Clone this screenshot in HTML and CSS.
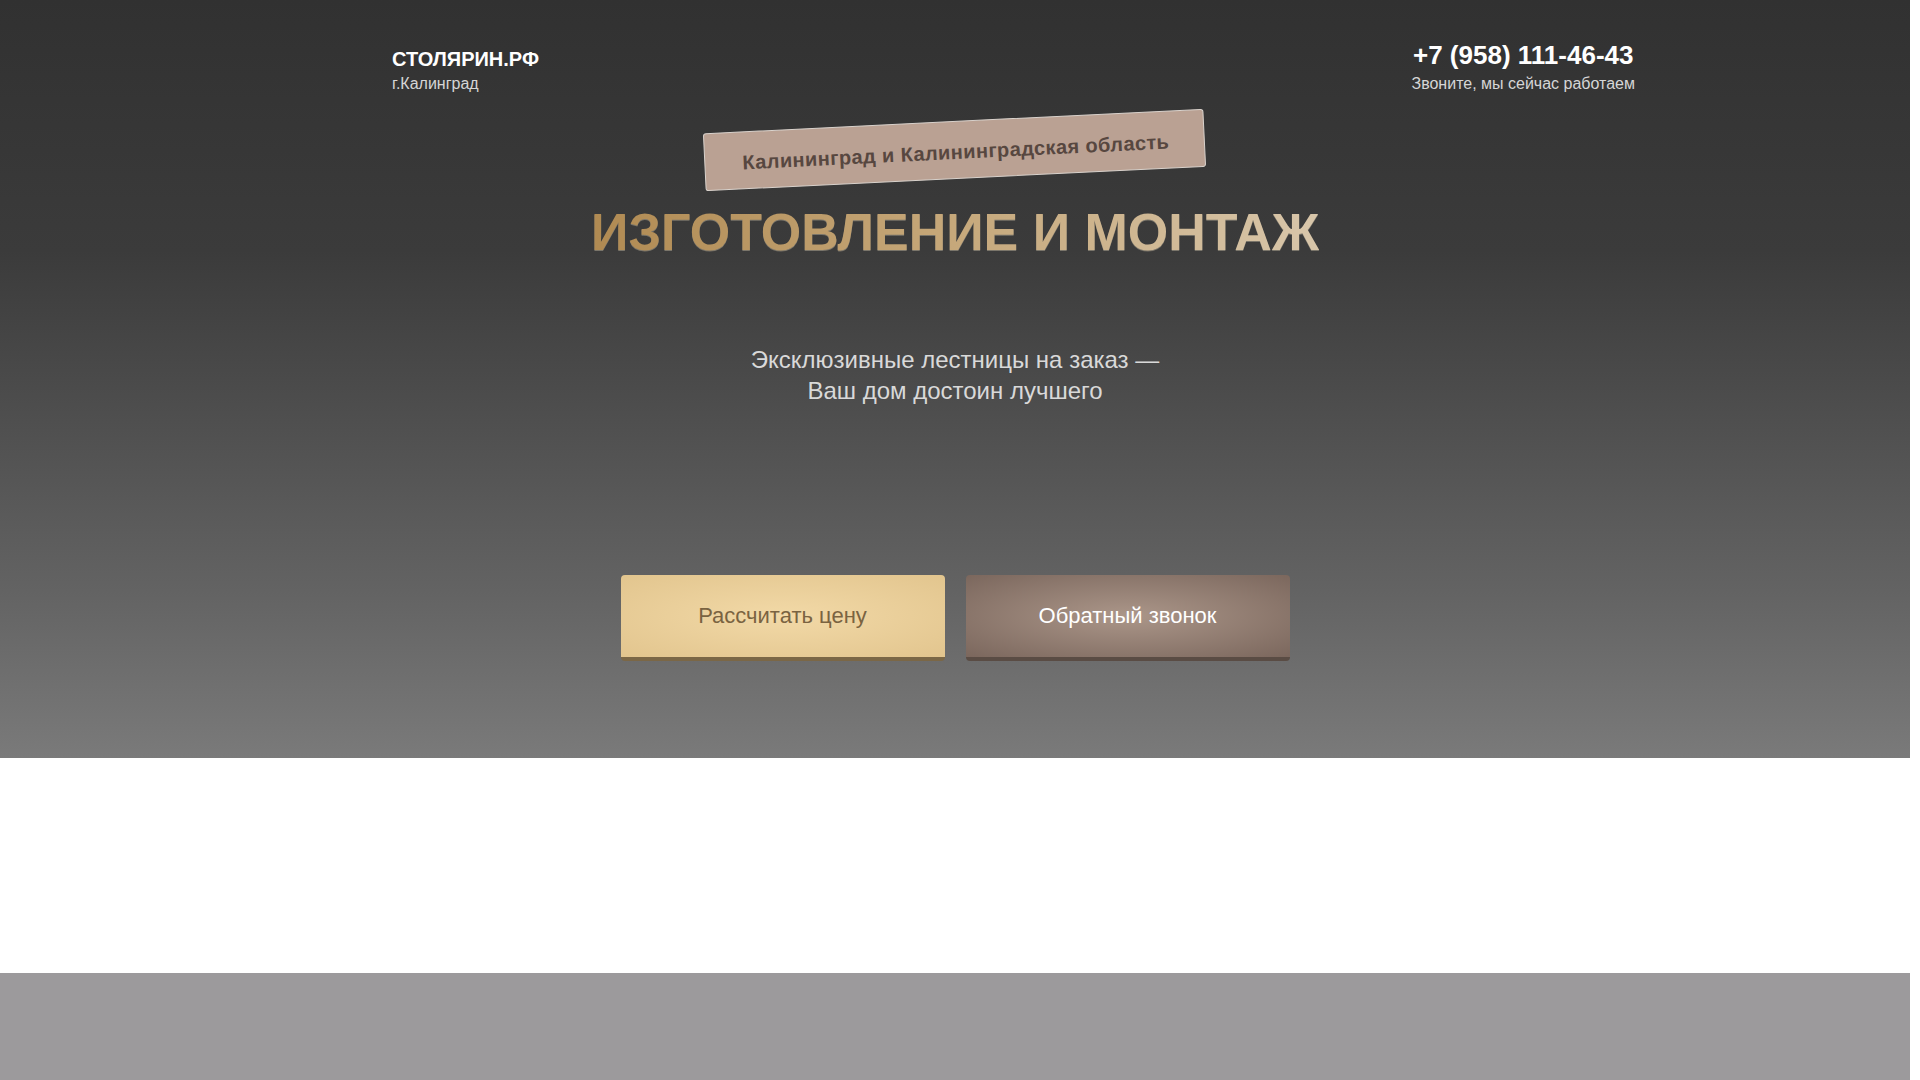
FILE: index.html
```html
<!DOCTYPE html>
<html lang="ru">
<head>
    <meta charset="UTF-8">
    <meta name="viewport" content="width=device-width, initial-scale=1.0">
    <title>Столярин.рф — лестницы на заказ</title>
    <link rel="stylesheet" href="styles.css">
</head>
<body>
    <section class="hero">
        <header class="header">
            <div class="logo">
                <div class="logo-name">СТОЛЯРИН.РФ</div>
                <div class="logo-city">г.Калинград</div>
            </div>
            <div class="contacts">
                <a class="phone" href="tel:+79581114643">+7 (958) 111-46-43</a>
                <div class="contacts-note">Звоните, мы сейчас работаем</div>
            </div>
        </header>
        <div class="region">
            <span class="region-tag">Калининград и Калининградская область</span>
        </div>
        <h1 class="title">ИЗГОТОВЛЕНИЕ И МОНТАЖ</h1>
        <p class="subtitle">Эксклюзивные лестницы на заказ —<br>Ваш дом достоин лучшего</p>
        <div class="actions">
            <button class="btn btn-gold">Рассчитать цену</button>
            <button class="btn btn-brown">Обратный звонок</button>
        </div>
    </section>
    <section class="blank"></section>
    <section class="gallery"></section>
</body>
</html>
```

FILE: styles.css
```css
html,body{
    margin: 0;
    padding: 0;
}
body{
    font-family: "Liberation Sans", Arial, sans-serif;
    background-color: white;
    padding-right: 10px;
}
::-webkit-scrollbar{
    width: 10px;
}
::-webkit-scrollbar-track{
    background: white;
}
::-webkit-scrollbar-thumb{
    background-color: #111;
    border: 2px solid white;
    border-radius: 5px;
}

/* first screen */
.hero{
    background: linear-gradient(180deg, #313131 0%, #3b3b3b 33%, #4a4a4a 50%, #636363 78%, #7a7a7a 100%);
    padding: 40px 0 97px;
    text-align: center;
}
.header{
    display: flex;
    justify-content: space-between;
    align-items: flex-end;
    padding: 0 275px 0 392px;
    text-align: left;
}
.logo-name{
    color: white;
    font-size: 20px;
    font-weight: 700;
    line-height: 23px;
}
.logo-city{
    margin-top: 4px;
    color: #d6d6d6;
    font-size: 16px;
    line-height: 18px;
}
.contacts{
    text-align: center;
}
.phone{
    display: block;
    color: white;
    font-size: 26px;
    font-weight: 700;
    line-height: 30px;
    text-decoration: none;
}
.contacts-note{
    margin-top: 5px;
    color: #d6d6d6;
    font-size: 16px;
    line-height: 18px;
}
.region{
    margin-top: 28px;
}
.region-tag{
    display: inline-block;
    height: 58px;
    line-height: 60px;
    padding: 0 35px 0 37px;
    background-color: #baa193;
    border: 1px solid #d9d2cc;
    border-radius: 3px;
    box-sizing: border-box;
    color: #574740;
    font-size: 20px;
    font-weight: 700;
    letter-spacing: 0.4px;
    transform: rotate(-2.8deg);
}
.title{
    margin: 27px 0 0;
    font-size: 52px;
    font-weight: 700;
    line-height: 52px;
    display: inline-block;
    background: linear-gradient(90deg, #b08a52 0%, #c4a576 45%, #d8c6aa 100%);
    -webkit-background-clip: text;
    background-clip: text;
    color: transparent;
    filter: drop-shadow(0 1px 0 rgba(240, 225, 195, 0.35));
}
.subtitle{
    margin: 86px 0 0;
    color: #d9d9d9;
    font-size: 24px;
    line-height: 31px;
}
.actions{
    display: flex;
    justify-content: center;
    gap: 21px;
    margin-top: 169px;
}
.btn{
    width: 324px;
    height: 86px;
    border: none;
    border-bottom: 4px solid;
    border-radius: 4px;
    font-family: inherit;
    font-size: 22px;
    cursor: pointer;
}
.btn-gold{
    background: radial-gradient(ellipse at center, #f2d9a7 0%, #e2c58e 100%);
    border-bottom-color: #7b6746;
    color: #7a6341;
}
.btn-brown{
    background: radial-gradient(ellipse at center, #ab9689 0%, #7b675d 100%);
    border-bottom-color: #5a4c44;
    color: white;
}

/* lower blocks */
.blank{
    height: 215px;
    background-color: white;
}
.gallery{
    height: 2200px;
    background-color: #9c9a9c;
}
```
